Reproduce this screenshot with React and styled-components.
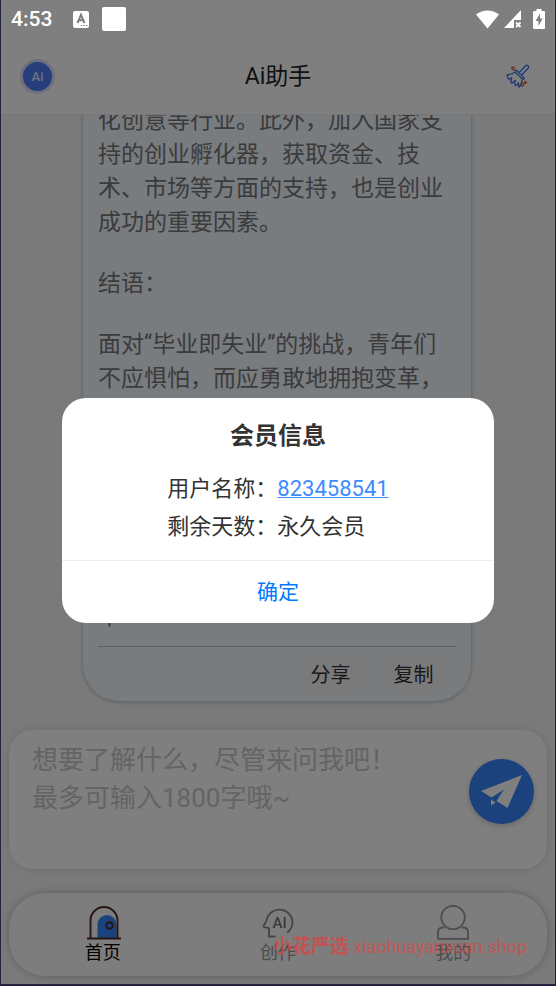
import React from 'react';
import styled, { createGlobalStyle } from 'styled-components';

const GlobalStyle = createGlobalStyle`
  * {
    box-sizing: border-box;
  }

  body {
    margin: 0;
    font-family: Roboto, 'Noto Sans CJK SC', sans-serif;
  }

  button {
    border: none;
    padding: 0;
    background: none;
    font-family: inherit;
    cursor: pointer;
  }
`;

const Screen = styled.div`
  display: flex;
  flex-direction: column;
  height: 100vh;
  min-height: 640px;
  border: solid #242440;
  border-width: 0 1px 2px;
  background-color: #f5f5f5;
  position: relative;
`;

const StatusBar = styled.div`
  display: flex;
  align-items: center;
  justify-content: space-between;
  flex: none;
  height: 38px;
  padding: 0 10px 0 10px;
  color: #fff;
  font-size: 21px;
  font-weight: 500;
  position: relative;
  z-index: 3;
`;

const StatusGroup = styled.div`
  display: flex;
  align-items: center;
  gap: ${(props) => props.$gap}px;
`;

const Clock = styled.span`
  margin-right: 8px;
`;

const Header = styled.header`
  display: flex;
  align-items: center;
  justify-content: space-between;
  flex: none;
  height: 115px;
  margin-top: -38px;
  padding: 38px 19px 0;
  background-color: #fff;
  border-bottom: 1px solid #eee;

  h1 {
    margin: 0;
    padding-bottom: 4px;
    font-size: 23px;
    font-weight: 400;
    color: #222;
  }
`;

const Avatar = styled.button`
  width: 35px;
  height: 35px;
  border: 3px solid #dbe0f8;
  border-radius: 50%;
  background-color: #4c7cf8;
  color: #dde5fb;
  font-size: 13px;
  font-weight: 500;
`;

const IconButton = styled.button`
  display: flex;
  justify-content: center;
  width: 35px;
`;

const Chat = styled.main`
  display: flex;
  flex-direction: column;
  justify-content: flex-end;
  flex: 1;
  min-height: 0;
  overflow: hidden;
  padding: 0 84px 29px 82px;
`;

const Message = styled.article`
  flex: none;
  padding: 0 15px 7px;
  border-radius: 36px;
  background-color: #f0f8ff;
  box-shadow: 0 1px 4px rgba(0, 0, 0, 0.25);
  color: #777;
  font-size: 23px;
  line-height: 34px;

  p {
    margin: 0 0 27px;
  }

  p:last-of-type {
    margin-bottom: 12px;
  }
`;

const MessageActions = styled.div`
  display: flex;
  justify-content: flex-end;
  gap: 12px;
  padding: 5px 7px 0 0;
  border-top: 1px solid #bcc4cb;
`;

const Pill = styled.button`
  width: 71px;
  height: 42px;
  border-radius: 21px;
  background-color: #f5f5f7;
  box-shadow: 0 0 3px rgba(0, 0, 0, 0.06);
  color: #333;
  font-size: 20px;
`;

const Composer = styled.form`
  display: flex;
  align-items: flex-start;
  flex: none;
  height: 139px;
  margin: 0 8px 24px;
  padding: 11px 13px 10px 23px;
  border-radius: 24px;
  background-color: #fff;
  box-shadow: 0 0 10px rgba(0, 0, 0, 0.12);

  textarea {
    flex: 1;
    min-width: 0;
    height: 100%;
    padding: 0;
    border: none;
    outline: none;
    resize: none;
    background: none;
    color: #333;
    font-family: inherit;
    font-size: 26px;
    line-height: 38px;
  }

  textarea::placeholder {
    color: #c8c8c8;
  }
`;

const SendButton = styled.button`
  flex: none;
  width: 65px;
  height: 65px;
  margin-top: 18px;
  border-radius: 50%;
  background-color: #3684fa;
  box-shadow: 0 2px 6px rgba(0, 0, 0, 0.2);

  svg {
    display: block;
  }
`;

const TabBar = styled.nav`
  display: flex;
  flex: none;
  height: 83px;
  margin: 0 8px 8px;
  padding: 12px 6px 0;
  border-radius: 36px;
  background-color: #fbfbfb;
  box-shadow: 0 0 8px rgba(0, 0, 0, 0.25);
`;

const Tab = styled.a`
  display: flex;
  flex-direction: column;
  align-items: center;
  flex: 1;
  color: ${(props) => (props.$active ? '#000' : '#999')};
  font-size: 18px;
  line-height: 24px;
  text-decoration: none;
`;

const Overlay = styled.div`
  display: flex;
  align-items: center;
  justify-content: center;
  position: absolute;
  inset: 0;
  z-index: 2;
  padding-top: 37px;
  background-color: rgba(0, 0, 0, 0.5);
`;

const Dialog = styled.section`
  width: 78%;
  max-width: 480px;
  border-radius: 24px;
  background-color: #fff;
  color: #333;
  overflow: hidden;

  h2 {
    margin: 0;
    padding: 21px 0 17px;
    font-size: 24px;
    font-weight: 700;
    line-height: 34px;
    text-align: center;
  }
`;

const MemberInfo = styled.div`
  width: fit-content;
  margin: 0 auto 14px;
  font-size: 22px;
  line-height: 38px;

  a {
    color: #3d8bff;
    text-decoration-thickness: 1px;
  }
`;

const ConfirmButton = styled.button`
  display: block;
  width: 100%;
  height: 63px;
  padding-bottom: 4px;
  border-top: 1px solid #eee;
  color: #007aff;
  font-size: 21px;
`;

const Watermark = styled.div`
  display: flex;
  align-items: center;
  gap: 4px;
  position: absolute;
  right: 28px;
  bottom: 24px;
  z-index: 3;
  color: rgba(225, 65, 65, 0.65);
  font-size: 18px;
  line-height: 26px;
  pointer-events: none;

  strong {
    font-size: 19px;
    font-weight: 900;
  }
`;

const KeyboardIcon = () => (
  <svg width="16" height="17" viewBox="0 0 16 17">
    <rect width="16" height="17" rx="2" fill="#fff" />
    <path d="M4.5 12 8 3.8 11.5 12M5.6 9.3h4.8" fill="none" stroke="#808080" strokeWidth="2" />
    <path d="M8 14.5h1.5M10.5 14.5H12M13 14.5h1.5" stroke="#808080" />
  </svg>
);

const BlankIcon = () => (
  <svg width="24" height="24" viewBox="0 0 24 24">
    <rect width="24" height="24" rx="2" fill="#fff" />
  </svg>
);

const WifiIcon = () => (
  <svg width="23" height="19" viewBox="0 0 23 19">
    <path d="M11.5 18.5 0 4.500C7-1 16-1 23 4.500z" fill="#fff" />
  </svg>
);

const SignalIcon = () => (
  <svg width="18" height="18" viewBox="0 0 18 18">
    <path d="M0 18 17 0V10H10V18z" fill="#fff" />
    <path d="m12 12.5 4.5 4.5m0-4.5L12 17" stroke="#fff" strokeWidth="1.8" />
  </svg>
);

const BatteryIcon = () => (
  <svg width="12" height="20" viewBox="0 0 12 20">
    <path d="M3.5 0h5v2H11a1 1 0 0 1 1 1v16a1 1 0 0 1-1 1H1a1 1 0 0 1-1-1V3a1 1 0 0 1 1-1h2.5z" fill="#fff" />
    <path d="M7 4.500 2.5 12H5.400v5L9.700 9.500H7z" fill="#808080" />
  </svg>
);

const BroomIcon = () => (
  <svg width="24" height="24" viewBox="0 0 24 24" fill="none" stroke="#3a72e8" strokeWidth="1.300" strokeLinejoin="round">
    <path d="m13.300 8.400 6.300-6.700c1.600-1.300 3.900.6 2.500 2.500l-6.300 6.500" />
    <path d="m10.400 6.300 7.700 7.300c.6 1.100-.6 2.100-1.500 1.400L9.200 8.200c-1-1 .2-2.400 1.200-1.900z" />
    <path d="M8.800 8.300C6.600 10 3.800 10.800 1 10.800c.3 1.600.9 3 1.700 4.300l3.100-1.300-1 4.200 1.200 1.200 3.200-2.700-.4 4.300 1.600.9 2-2.800.6 4.300c2-2 2.900-4.200 3.200-8" />
    <g stroke="#e0602c">
      <circle cx="7" cy="4.300" r="1.300" />
      <circle cx="16.300" cy="20.800" r="1.400" />
      <path d="M19.400 16.800v3.400m-1.700-1.700h3.400" />
    </g>
  </svg>
);

const PlaneIcon = () => (
  <svg width="65" height="65" viewBox="0 0 65 65" fill="#fff">
    <path d="M53 16 12 32l10.500 6.500L35 30.500 27.500 42 38.500 49z" />
    <path d="M22 40.500v6l4.500-3z" />
  </svg>
);

const HomeIcon = () => (
  <svg width="36" height="36" viewBox="0 0 36 36" fill="none" stroke="#4a2c26" strokeWidth="1.900">
    <path d="M12.500 33V19.500a9.500 9.500 0 0 1 19 0V33z" fill="#3684fa" stroke="none" />
    <path d="M5.500 33V15.500a13.500 13.500 0 0 1 27 0V33" />
    <path d="M2 33.500h34" />
    <circle cx="24.500" cy="20.500" r="3.200" />
  </svg>
);

const CreateIcon = () => (
  <svg width="36" height="36" viewBox="0 0 36 36" fill="none" stroke="#888" strokeWidth="1.800" strokeLinejoin="round">
    <path d="M15.500 31.500H9v-8.300l-4.800-1c-.7-.2-.9-1-.5-1.600C5.200 18.400 6.700 16.500 6.700 14.500A13.100 13.100 0 0 1 32.500 17c0 4.300-1.900 8-5.300 10.500" />
    <text x="12.500" y="22.500" fill="#777" stroke="none" fontSize="15" fontWeight="500">AI</text>
  </svg>
);

const UserIcon = () => (
  <svg width="36" height="36" viewBox="0 0 36 36" fill="none" stroke="#999" strokeWidth="1.800">
    <circle cx="18" cy="12.500" r="11.700" />
    <path d="M9.500 22.500H8c-3 0-5 2-5 5v6.300h30v-6.300c0-3-2-5-5-5h-1.500" />
  </svg>
);

const App = () => {
  return (
    <>
      <GlobalStyle />
      <Screen>
        <StatusBar>
          <StatusGroup $gap={13}>
            <Clock>4:53</Clock>
            <KeyboardIcon />
            <BlankIcon />
          </StatusGroup>
          <StatusGroup $gap={11}>
            <StatusGroup $gap={5}>
              <WifiIcon />
              <SignalIcon />
            </StatusGroup>
            <BatteryIcon />
          </StatusGroup>
        </StatusBar>

        <Header>
          <Avatar>Ai</Avatar>
          <h1>Ai助手</h1>
          <IconButton aria-label="清空">
            <BroomIcon />
          </IconButton>
        </Header>

        <Chat>
          <Message>
            <p>
              青年们也可以关注新能源、数字文化创意等行业。此外，加入国家支持的创业孵化器，获取资金、技术、市场等方面的支持，也是创业成功的重要因素。
            </p>
            <p>结语：</p>
            <p>
              面对“毕业即失业”的挑战，青年们不应惧怕，而应勇敢地拥抱变革，以积极的心态面对每一次选择，把握时代赋予的机遇，不断提升自身的专业能力与综合素质，在实践中积累经验，在探索中找到方向。只要坚定信念并且脚踏实地持续努力就一定能够把梦想融入时代浪潮之中
            </p>
            <MessageActions>
              <Pill>分享</Pill>
              <Pill>复制</Pill>
            </MessageActions>
          </Message>
        </Chat>

        <Composer onSubmit={(e) => e.preventDefault()}>
          <textarea aria-label="提问" placeholder={'想要了解什么，尽管来问我吧！\n最多可输入1800字哦~'} />
          <SendButton aria-label="发送">
            <PlaneIcon />
          </SendButton>
        </Composer>

        <TabBar>
          <Tab href="#home" $active>
            <HomeIcon />
            首页
          </Tab>
          <Tab href="#create">
            <CreateIcon />
            创作
          </Tab>
          <Tab href="#mine">
            <UserIcon />
            我的
          </Tab>
        </TabBar>

        <Overlay>
          <Dialog role="dialog" aria-modal="true" aria-labelledby="member-title">
            <h2 id="member-title">会员信息</h2>
            <MemberInfo>
              <div>
                用户名称：<a href="#user">823458541</a>
              </div>
              <div>剩余天数：永久会员</div>
            </MemberInfo>
            <ConfirmButton>确定</ConfirmButton>
          </Dialog>
        </Overlay>

        <Watermark>
          <strong>小花严选</strong>
          <span>xiaohuayanxuan.shop</span>
        </Watermark>
      </Screen>
    </>
  );
};

export default App;
